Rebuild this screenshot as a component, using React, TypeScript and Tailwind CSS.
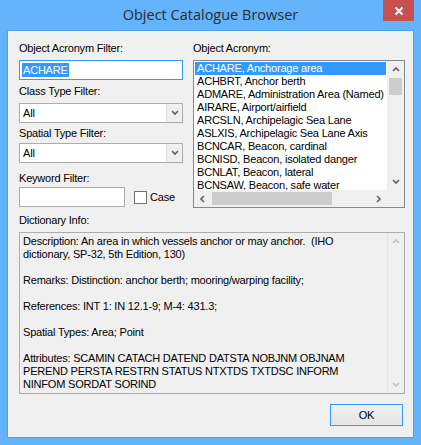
import React from 'react'

// Object Catalogue Browser — classic Win8-style dialog

const ui = "font-['Liberation_Sans',Arial,sans-serif] text-[11px] leading-[13px] tracking-[-0.2px] text-black"

function Chevron({ dir, color = '#606060' }: { dir: 'up' | 'down' | 'left' | 'right'; color?: string }) {
  const pts = {
    up: '1,5 4,2 7,5',
    down: '1,2 4,5 7,2',
    left: '5,1 2,4 5,7',
    right: '2,1 5,4 2,7',
  }[dir]
  return (
    <svg width="8" height="8" viewBox="0 0 8 8">
      <polyline points={pts} fill="none" stroke={color} strokeWidth="1.6" />
    </svg>
  )
}

function Label({ children }: { children: React.ReactNode }) {
  return <div className="h-[13px] whitespace-nowrap">{children}</div>
}

function Combo({ value, className = '' }: { value: string; className?: string }) {
  return (
    <div className={`flex h-[20px] border border-[#acacac] bg-white ${className}`}>
      <div className="flex-1 pl-[3px] flex items-center">{value}</div>
      <div className="w-[16px] border-l border-[#dcdcdc] bg-[#f0f0f0] flex items-center justify-center">
        <Chevron dir="down" />
      </div>
    </div>
  )
}

const acronyms = [
  'ACHARE, Anchorage area',
  'ACHBRT, Anchor berth',
  'ADMARE, Administration Area (Named)',
  'AIRARE, Airport/airfield',
  'ARCSLN, Archipelagic Sea Lane',
  'ASLXIS, Archipelagic Sea Lane Axis',
  'BCNCAR, Beacon, cardinal',
  'BCNISD, Beacon, isolated danger',
  'BCNLAT, Beacon, lateral',
  'BCNSAW, Beacon, safe water',
]

const info = [
  'Description: An area in which vessels anchor or may anchor.  (IHO',
  'dictionary, SP-32, 5th Edition, 130)',
  '',
  'Remarks: Distinction: anchor berth; mooring/warping facility;',
  '',
  'References: INT 1: IN 12.1-9; M-4: 431.3;',
  '',
  'Spatial Types: Area; Point',
  '',
  'Attributes: SCAMIN CATACH DATEND DATSTA NOBJNM OBJNAM',
  'PEREND PERSTA RESTRN STATUS NTXTDS TXTDSC INFORM',
  'NINFOM SORDAT SORIND',
]

export default function App() {
  return (
    <div className="relative w-[421px] h-[445px] bg-[#63b4fb] flex flex-col">
      <div className="h-[30px] flex items-center justify-center font-['Open_Sans','Noto_Sans',sans-serif] text-[14.5px] text-[#2b2b2b]">
        Object Catalogue Browser
      </div>
      <button className="absolute right-[7px] top-0 w-[31px] h-[21px] bg-[#c75050] flex items-center justify-center">
        <svg width="10" height="10" viewBox="0 0 10 10">
          <path d="M1.5 1.5 L8.5 8.5 M8.5 1.5 L1.5 8.5" stroke="white" strokeWidth="2" />
        </svg>
      </button>

      <div className={`mx-[7px] h-[408px] border border-[#52a0ea] bg-[#f0f0f0] pl-[11px] pr-[8px] pt-[11px] flex flex-col ${ui}`}>
        <div className="flex gap-[10px]">
          {/* left column */}
          <div className="w-[164px] flex flex-col">
            <Label>Object Acronym Filter:</Label>
            <div className="mt-[5px] h-[20px] border border-[#3399ff] bg-white pl-[2px] flex items-center">
              <span className="bg-[#3399ff] text-white px-[1px] leading-[14px]">ACHARE</span>
            </div>
            <div className="mt-[5px]"><Label>Class Type Filter:</Label></div>
            <Combo value="All" className="mt-[5px]" />
            <div className="mt-[4px]"><Label>Spatial Type Filter:</Label></div>
            <Combo value="All" className="mt-[3px]" />
            <div className="mt-[9px]"><Label>Keyword Filter:</Label></div>
            <div className="mt-[2px] flex items-center">
              <div className="w-[106px] h-[20px] border border-[#acacac] bg-white" />
              <div className="ml-[9px] w-[13px] h-[13px] border border-[#707070] bg-white" />
              <span className="ml-[3px]">Case</span>
            </div>
          </div>

          {/* right column */}
          <div className="w-[212px] flex flex-col">
            <Label>Object Acronym:</Label>
            <div className="mt-[5px] h-[148px] border border-[#828790] bg-white flex flex-col">
              <div className="flex h-[129px]">
                <div className="flex-1 overflow-hidden pt-[1px] px-[1px]">
                  {acronyms.map((a, i) => (
                    <div
                      key={a}
                      className={`h-[13px] pl-[2px] whitespace-nowrap ${i === 0 ? 'bg-[#3399ff] text-white' : ''}`}
                    >
                      {a}
                    </div>
                  ))}
                </div>
                <div className="w-[17px] bg-[#f0f0f0] flex flex-col">
                  <div className="h-[17px] flex items-center justify-center"><Chevron dir="up" /></div>
                  <div className="mx-[2px] h-[17px] bg-[#cdcdcd]" />
                  <div className="flex-1" />
                  <div className="h-[17px] flex items-center justify-center"><Chevron dir="down" /></div>
                </div>
              </div>
              <div className="flex h-[17px]">
                <div className="flex-1 bg-[#f0f0f0] flex items-center">
                  <div className="w-[17px] flex items-center justify-center"><Chevron dir="left" /></div>
                  <div className="ml-[1px] w-[120px] h-[13px] bg-[#cdcdcd]" />
                  <div className="flex-1" />
                  <div className="w-[17px] flex items-center justify-center"><Chevron dir="right" /></div>
                </div>
                <div className="w-[17px] bg-[#f0f0f0]" />
              </div>
            </div>
          </div>
        </div>

        <div className="mt-[6px]"><Label>Dictionary Info:</Label></div>
        <div className="mt-[5px] w-[386px] h-[162px] border border-[#adadad] bg-[#f0f0f0] flex">
          <div className="flex-1 pl-[3px] pt-[2px] overflow-hidden">
            {info.map((l, i) => (
              <div key={i} className="h-[13px] whitespace-pre">{l}</div>
            ))}
          </div>
          <div className="w-[17px] border-l border-[#e3e3e3] flex flex-col justify-between">
            <div className="h-[17px] flex items-center justify-center"><Chevron dir="up" color="#c2c2c2" /></div>
            <div className="h-[17px] flex items-center justify-center"><Chevron dir="down" color="#c2c2c2" /></div>
          </div>
        </div>

        <div className="mt-[10px] w-[386px] flex justify-end">
          <button className="mr-[2px] w-[73px] h-[22px] border border-[#3399ff] bg-gradient-to-b from-[#f0f0f0] to-[#e5e5e5] flex items-center justify-center">
            OK
          </button>
        </div>
      </div>
    </div>
  )
}
